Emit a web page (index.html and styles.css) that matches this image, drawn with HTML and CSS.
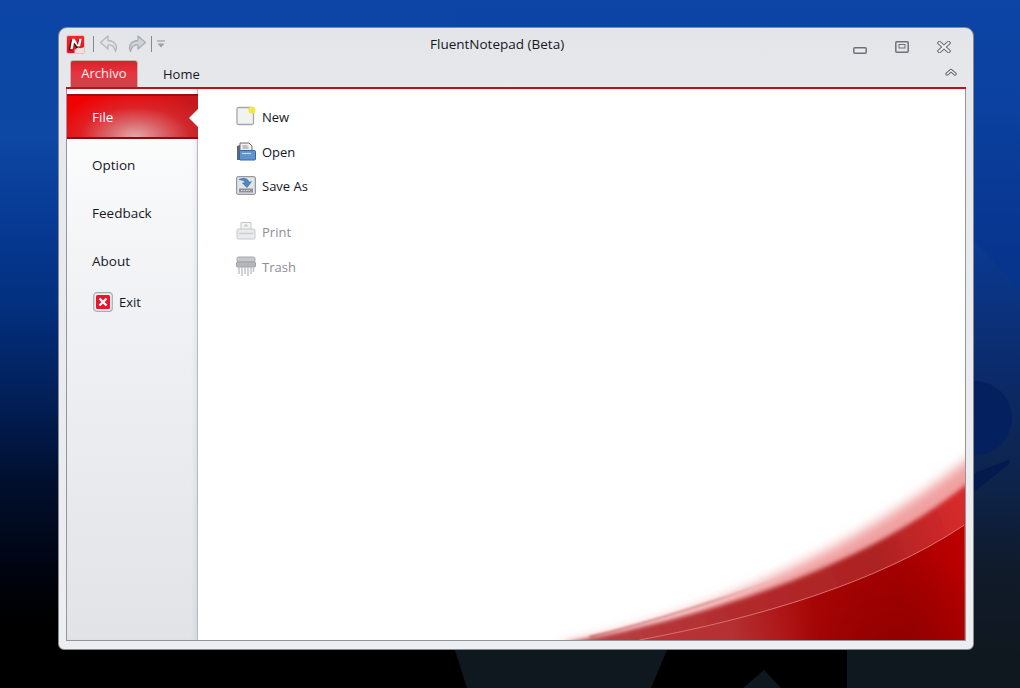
FILE: index.html
```html
<!DOCTYPE html>
<html lang="en">
<head>
<meta charset="utf-8">
<title>FluentNotepad (Beta)</title>
<link rel="stylesheet" href="styles.css">
</head>
<body>
<svg class="wallpaper" viewBox="0 0 1020 688" aria-hidden="true">
  <defs>
    <linearGradient id="wallRight" x1="0" y1="0" x2="0" y2="1">
      <stop offset="0" stop-color="#0c45a6"/>
      <stop offset=".32" stop-color="#0a3c98"/>
      <stop offset=".55" stop-color="#0c2a68"/>
      <stop offset=".71" stop-color="#0d2348"/>
      <stop offset=".83" stop-color="#101a2a"/>
      <stop offset=".95" stop-color="#10181f"/>
      <stop offset="1" stop-color="#10181f"/>
    </linearGradient>
    <linearGradient id="wallLeft" x1="0" y1="0" x2="0" y2="1">
      <stop offset="0" stop-color="#0c45a5"/>
      <stop offset=".2" stop-color="#0d48a4"/>
      <stop offset=".32" stop-color="#073a94"/>
      <stop offset=".44" stop-color="#03307f"/>
      <stop offset=".57" stop-color="#02205a"/>
      <stop offset=".7" stop-color="#010f2e"/>
      <stop offset=".83" stop-color="#000410"/>
      <stop offset=".9" stop-color="#000"/>
      <stop offset="1" stop-color="#000"/>
    </linearGradient>
    <linearGradient id="wallCorner" gradientUnits="userSpaceOnUse" x1="0" y1="110" x2="0" y2="280">
      <stop offset="0" stop-color="#06348e" stop-opacity="0"/>
      <stop offset="1" stop-color="#06348e" stop-opacity=".9"/>
    </linearGradient>
  </defs>
  <rect width="1020" height="688" fill="url(#wallRight)"/>
  <polygon points="0,0 455,0 455,650 467,688 0,688" fill="url(#wallLeft)"/>
  <polygon points="974,110 1020,110 1020,290 974,241" fill="url(#wallCorner)"/>
  <circle cx="975" cy="418" r="37" fill="#04205e"/>
  <path d="M970 475l38-15q4 1 0 5l-38 30z" fill="#041a4c"/>
  <polygon points="667,650 847,650 847,688 781,688 764,670 743,688 651,688" fill="#000"/>
</svg>

<main class="window">
  <header class="titlebar">
    <div class="qat">
      <svg class="app-icon" viewBox="0 0 20 20">
        <defs>
          <linearGradient id="appRed" x1="0" y1="0" x2="0" y2="1"><stop offset="0" stop-color="#f5262a"/><stop offset="1" stop-color="#d8141c"/></linearGradient>
        </defs>
        <rect x=".5" y=".5" width="19" height="19" rx="2" fill="url(#appRed)" stroke="#d6cfd2"/>
        <path d="M3 16l2-11h3l3.500 6L13 5h3l-2 9h-3L8 9.500 6.800 16z" fill="#43060a"/>
        <path d="M4.500 15l2-11h2.500l3.500 6.500L14 4h2.500l-1.700 8h-3L8.500 8 7 15z" fill="#fff"/>
        <path d="M9 19v-3.500l4-2.500 2 1 4-1v6z" fill="#f7f2f2" opacity=".9"/>
      </svg>
      <span class="qat-sep"></span>
      <svg class="qat-arrow" viewBox="0 0 20 20">
        <path d="M9 2L1.500 8.500 9 15v-4c4-.5 6.500 1 7.500 6.500 2-4 1.500-10-7.500-11z" fill="#e2e4e8" stroke="#b4b8be" stroke-width="1.300" stroke-linejoin="round"/>
      </svg>
      <svg class="qat-arrow" viewBox="0 0 20 20">
        <path d="M11 2l7.500 6.500L11 15v-4c-4-.5-6.500 1-7.500 6.500-2-4-1.500-10 7.500-11z" fill="#d0d3d8" stroke="#a9adb4" stroke-width="1.300" stroke-linejoin="round"/>
      </svg>
      <span class="qat-sep"></span>
      <svg class="qat-more" viewBox="0 0 10 8">
        <path d="M1 1h8" stroke="#9a9ea6" stroke-width="1.200"/>
        <path d="M1.500 3.500h7L5 7.500z" fill="#9a9ea6"/>
      </svg>
    </div>
    <h1 class="title">FluentNotepad (Beta)</h1>
    <div class="controls">
      <svg class="ctl-min" viewBox="0 0 14 7"><rect x=".8" y=".8" width="12.400" height="5.400" rx="1" fill="#e8eaee" stroke="#6d7179" stroke-width="1.500"/></svg>
      <svg class="ctl-max" viewBox="0 0 14 12"><rect x=".8" y=".8" width="12.400" height="10.400" rx="1" fill="#e4e6ea" stroke="#6d7179" stroke-width="1.500"/><rect x="4" y="3.500" width="6" height="3.500" fill="none" stroke="#6d7179"/></svg>
      <svg class="ctl-close" viewBox="0 0 14 12"><path d="M2.500 2l9 8m0-8l-9 8" stroke="#6d7179" stroke-width="4.200" stroke-linecap="square"/><path d="M2.500 2l9 8m0-8l-9 8" stroke="#eff1f4" stroke-width="2" stroke-linecap="square"/></svg>
    </div>
  </header>
  <nav class="tabs">
    <span class="tab-file">Archivo</span>
    <span class="tab">Home</span>
    <svg class="collapse" viewBox="0 0 12 8"><path d="M2 6l4-3.500L10 6" fill="none" stroke="#5f636b" stroke-width="3.400" stroke-linecap="round" stroke-linejoin="round"/><path d="M2 6l4-3.500L10 6" fill="none" stroke="#f1f2f5" stroke-width="1.400" stroke-linecap="round" stroke-linejoin="round"/></svg>
  </nav>
  <div class="backstage">
    <aside class="side">
      <div class="side-item side-item-active">File</div>
      <div class="side-item">Option</div>
      <div class="side-item">Feedback</div>
      <div class="side-item">About</div>
      <div class="side-exit">
        <svg class="exit-icon" viewBox="0 0 20 20">
          <rect x=".7" y=".7" width="18.600" height="18.600" rx="3" fill="#eceef0" stroke="#a9adb3" stroke-width="1.200"/>
          <rect x="3" y="3" width="14" height="14" rx="1.500" fill="#e8152b"/>
          <path d="M6.500 6.500l7 7m0-7l-7 7" stroke="#fff" stroke-width="2.400"/>
        </svg>
        <span>Exit</span>
      </div>
    </aside>
    <section class="content">
      <svg class="swoosh" viewBox="0 0 768 552" preserveAspectRatio="none" aria-hidden="true">
        <defs>
          <filter id="soft" x="-10%" y="-20%" width="120%" height="140%"><feGaussianBlur stdDeviation="6"/></filter>
          <filter id="softEdge" x="-5%" y="-10%" width="110%" height="120%"><feGaussianBlur stdDeviation="2"/></filter>
          <filter id="softLine" x="-5%" y="-20%" width="110%" height="140%"><feGaussianBlur stdDeviation=".8"/></filter>
          <linearGradient id="redBody" gradientUnits="userSpaceOnUse" x1="430" y1="552" x2="767" y2="480">
            <stop offset="0" stop-color="#bb3537"/>
            <stop offset=".3" stop-color="#b53033"/>
            <stop offset=".55" stop-color="#a90606"/>
            <stop offset=".8" stop-color="#a50000"/>
            <stop offset="1" stop-color="#bb0000"/>
          </linearGradient>
          <radialGradient id="redLow" gradientUnits="userSpaceOnUse" cx="700" cy="570" r="110">
            <stop offset="0" stop-color="#8f0000"/>
            <stop offset="1" stop-color="#8f0000" stop-opacity="0"/>
          </radialGradient>
          <linearGradient id="band" gradientUnits="userSpaceOnUse" x1="380" y1="552" x2="767" y2="410">
            <stop offset="0" stop-color="#b84347"/>
            <stop offset=".4" stop-color="#b12a2c"/>
            <stop offset=".75" stop-color="#ad2222"/>
            <stop offset="1" stop-color="#d92b2d"/>
          </linearGradient>
          <linearGradient id="innerLine" gradientUnits="userSpaceOnUse" x1="392" y1="549" x2="592" y2="486">
            <stop offset="0" stop-color="#b02a2d" stop-opacity=".8"/>
            <stop offset=".6" stop-color="#b02a2d" stop-opacity=".6"/>
            <stop offset="1" stop-color="#d98a8a" stop-opacity="0"/>
          </linearGradient>
          <clipPath id="panelClip"><rect width="768" height="552"/></clipPath>
        </defs>
        <g clip-path="url(#panelClip)">
          <path d="M366 556C470 537 640 480 790 356V570H366z" fill="#f0a0a0" filter="url(#soft)"/>
          <path d="M372 554C480 535 650 490 767 398L790 380V560H372z" fill="url(#band)" filter="url(#softEdge)"/>
          <path d="M442 552C560 530 680 495 767 437V552z" fill="url(#redBody)"/>
          <path d="M442 552C560 530 680 495 767 437V552z" fill="url(#redLow)"/>
          <path d="M442 552C560 530 680 495 767 437" fill="none" stroke="#dc6e6e" stroke-width="1"/>
          <path d="M392 549C450 535 530 510 592 486" fill="none" stroke="url(#innerLine)" stroke-width="1.400" filter="url(#softLine)"/>
        </g>
      </svg>
      <ul class="cmds">
        <li class="cmd">
          <svg class="cmd-icon" viewBox="0 0 20 20"><rect x="1" y="1.500" width="16.500" height="17" rx="1.500" fill="#f2f2ef" stroke="#a4a7aa" stroke-width="1.300"/><circle cx="16" cy="4" r="3.500" fill="#f2e844"/></svg>
          <span>New</span>
        </li>
        <li class="cmd">
          <svg class="cmd-icon" viewBox="0 0 20 20"><path d="M1 5l3-1v15H1z" fill="#5d6670"/><path d="M4 2h9l3 3v5H4z" fill="#eef0f2" stroke="#67707a"/><path d="M6.500 5h5M6.500 7h6" stroke="#8a929a"/><rect x="3.500" y="9.500" width="16" height="9.500" rx="1" fill="#5f93ce" stroke="#34689f"/><path d="M6 12.500h9" stroke="#c4dcf2" stroke-width="1.200"/></svg>
          <span>Open</span>
        </li>
        <li class="cmd">
          <svg class="cmd-icon" viewBox="0 0 20 20"><rect x=".7" y="1.700" width="18.600" height="17.600" rx="1" fill="#e2e5e8" stroke="#7d848a"/><rect x="3" y="13.500" width="14" height="4" fill="#8c9298"/><path d="M5 15.500h10" stroke="#d6d9dc" stroke-dasharray="1.500 1"/><path d="M3 4.500c5-2 9-1.500 10 3l2.500-1L11 12.500 6.500 8 9.500 7.500c-1-2-3-2.500-6.500-3z" fill="#4b8ac6" stroke="#2a6098" stroke-width=".6"/></svg>
          <span>Save As</span>
        </li>
        <li class="cmd cmd-off">
          <svg class="cmd-icon" viewBox="0 0 20 20"><path d="M5 1.500h10v7H5z" fill="#f2f3f4" stroke="#c4c7ca"/><path d="M10 3l2.500 2.500h-5z" fill="#c4c7ca"/><rect x="1" y="8" width="18" height="10" rx="1.500" fill="#eaebed" stroke="#c4c7ca"/><path d="M3 12.500h14" stroke="#c9ccd0" stroke-width="1.500"/></svg>
          <span>Print</span>
        </li>
        <li class="cmd cmd-off">
          <svg class="cmd-icon" viewBox="0 0 20 20"><rect x="1" y="1" width="18" height="5" rx="1.500" fill="#c6c8cb" stroke="#a6a8ac"/><rect x=".5" y="6" width="19" height="5" rx="1" fill="#b4b7ba" stroke="#9fa2a6"/><path d="M3 11v7M6 11v9M9 11v7M12 11v9M15 11v7M17.500 11v5" stroke="#c2c4c8" stroke-width="1.500"/></svg>
          <span>Trash</span>
        </li>
      </ul>
    </section>
  </div>
</main>
</body>
</html>
```
FILE: styles.css
```css
* { box-sizing: border-box; }
html, body { margin: 0; height: 100%; }
body {
  position: relative;
  width: 1020px;
  height: 688px;
  overflow: hidden;
  background: #000;
  font-family: "Open Sans", "Liberation Sans", sans-serif;
  color: #16161f;
  padding: 27px 46px 38px 58px;
}
.wallpaper { position: absolute; left: 0; top: 0; width: 1020px; height: 688px; }
.window {
  position: relative;
  width: 916px;
  height: 623px;
  display: flex;
  flex-direction: column;
  padding: 0 7px 8px 7px;
  border-radius: 9px 9px 6px 6px;
  border: 1px solid #868a90;
  background: linear-gradient(#e3e5e9 0, #e6e8ec 60px, #eceef2 100%);
}
.titlebar {
  height: 33px;
  flex: none;
  display: grid;
  grid-template-columns: 364px auto 1fr;
  align-items: center;
}
.qat { display: flex; align-items: center; margin-top: -1px; }
.app-icon { width: 19px; height: 19px; }
.qat-sep { width: 1px; height: 16px; background: #85898f; margin: 0 5px 0 8px; }
.qat-arrow { width: 20px; height: 20px; margin-right: 8px; }
.qat-arrow + .qat-sep { margin-left: -4px; margin-right: 4px; }
.qat-more { width: 10px; height: 8px; }
.title {
  margin: -2px 0 0;
  font-size: 13.500px;
  font-weight: 400;
  color: #16161f;
}
.controls {
  display: flex;
  justify-content: flex-end;
  align-items: center;
  padding-right: 15px;
  padding-top: 5px;
}
.ctl-min { width: 14px; height: 7px; margin: 7px 28px 0 0; }
.ctl-max { width: 14px; height: 12px; margin-right: 28px; }
.ctl-close { width: 14px; height: 12px; }
.tabs {
  height: 28px;
  flex: none;
  display: flex;
  align-items: flex-end;
  border-bottom: 2px solid #c40d14;
  position: relative;
}
.tab-file {
  width: 68px;
  height: 27px;
  margin-left: 4px;
  border: 1px solid #c9b3b6;
  border-bottom: 0;
  border-radius: 3px 3px 0 0;
  background: linear-gradient(#d9232a, #e8323c 45%, #c9494f);
  color: #fbf2f2;
  font-size: 13px;
  line-height: 24px;
  text-align: center;
}
.tab { margin-left: 25px; font-size: 13px; line-height: 27px; height: 26px; }
.collapse { position: absolute; right: 9px; top: 7px; width: 12px; height: 8px; }
.backstage {
  flex: 1;
  display: flex;
  min-height: 0;
  background: #fff;
  border: 1px solid #93979d;
  border-top: 0;
}
.side {
  width: 131px;
  flex: none;
  padding-top: 5px;
  display: flex;
  flex-direction: column;
  gap: 3px;
  border-right: 1px solid #b6bac0;
  background: linear-gradient(#fff 0, #f3f4f6 170px, #e1e3e7 100%);
  box-shadow: inset -4px 0 4px -2px rgba(120, 125, 135, .12);
  font-size: 13.500px;
}
.side-item { height: 45px; line-height: 47px; padding-left: 25px; }
.side-item-active {
  position: relative;
  margin-right: -1px;
  color: #fff;
  border-top: 2px solid #a00c10;
  border-bottom: 2px solid #8e0b10;
  line-height: 43px;
  background: radial-gradient(ellipse 85px 46px at 52% 100%, #e8a8aa 0, #d96a6e 30%, rgba(214, 50, 55, .6) 65%, rgba(214, 30, 36, 0) 100%), linear-gradient(100deg, #f20000 0, #e8090d 55%, #bd1c20 100%);
}
.side-item-active::after {
  content: "";
  position: absolute;
  right: 0;
  top: 13px;
  border: 9px solid transparent;
  border-left-width: 0;
  border-right-color: #fff;
}
.side-exit { display: flex; align-items: center; gap: 6px; padding-left: 26px; height: 32px; font-size: 13px; }
.exit-icon { width: 20px; height: 20px; }
.content { position: relative; flex: 1; min-width: 0; }
.swoosh { position: absolute; left: 0; top: 0; width: 100%; height: 100%; }
.cmds { position: relative; list-style: none; margin: 0; padding: 11px 0 0 38px; font-size: 13px; font-weight: 500; }
.cmd { height: 34.500px; display: flex; align-items: center; gap: 6px; }
.cmd-icon { width: 20px; height: 20px; margin-top: -2px; }
.cmd-off { color: #8f8c9a; font-weight: 400; }
.cmd-off:nth-child(4) { margin-top: 11.500px; }
```
